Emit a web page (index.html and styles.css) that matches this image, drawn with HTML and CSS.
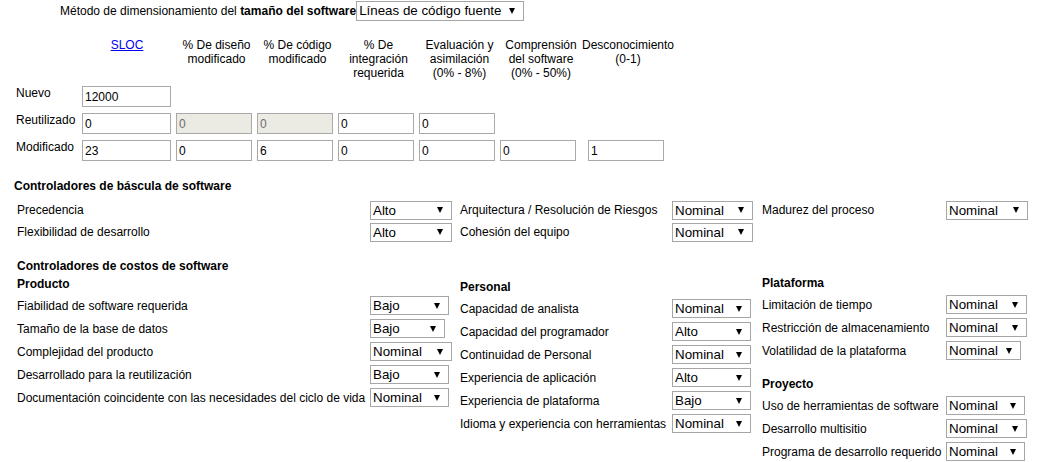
FILE: index.html
```html
<!DOCTYPE html>
<html lang="es">
<head>
<meta charset="utf-8">
<title>COCOMO II</title>
<link rel="stylesheet" href="styles.css">
</head>
<body>
<div class="method">
  <span class="method-label">Método de dimensionamiento del <b>tamaño del software</b></span>
  <span class="dd w168 tall"><select><option>Líneas de código fuente</option></select></span>
</div>

<div class="sizing">
  <div class="sz-row sz-head">
    <div></div>
    <div class="hd c1"><a href="#">SLOC</a></div>
    <div class="hd">% De diseño<br>modificado</div>
    <div class="hd">% De código<br>modificado</div>
    <div class="hd">% De<br>integración<br>requerida</div>
    <div class="hd">Evaluación y<br>asimilación<br>(0% - 8%)</div>
    <div class="hd">Comprensión<br>del software<br>(0% - 50%)</div>
    <div class="hd c7">Desconocimiento<br>(0-1)</div>
  </div>
  <div class="sz-row">
    <div class="rl">Nuevo</div>
    <div><input class="in wide" type="text" value="12000"></div>
  </div>
  <div class="sz-row">
    <div class="rl">Reutilizado</div>
    <div><input class="in wide" type="text" value="0"></div>
    <div><input class="in" type="text" value="0" disabled></div>
    <div><input class="in" type="text" value="0" disabled></div>
    <div><input class="in" type="text" value="0"></div>
    <div><input class="in" type="text" value="0"></div>
  </div>
  <div class="sz-row">
    <div class="rl">Modificado</div>
    <div><input class="in wide" type="text" value="23"></div>
    <div><input class="in" type="text" value="0"></div>
    <div><input class="in" type="text" value="6"></div>
    <div><input class="in" type="text" value="0"></div>
    <div><input class="in" type="text" value="0"></div>
    <div><input class="in" type="text" value="0"></div>
    <div><input class="in last" type="text" value="1"></div>
  </div>
</div>

<div class="scale">
  <div class="section-title st-scale">Controladores de báscula de software</div>
  <div class="scale-grid">
    <div class="lab la">Precedencia</div>
    <span class="dd w82"><select><option>Alto</option></select></span>
    <div class="lab">Arquitectura / Resolución de Riesgos</div>
    <span class="dd w81"><select><option>Nominal</option></select></span>
    <div class="lab">Madurez del proceso</div>
    <span class="dd w82"><select><option>Nominal</option></select></span>

    <div class="lab la">Flexibilidad de desarrollo</div>
    <span class="dd w82"><select><option>Alto</option></select></span>
    <div class="lab">Cohesión del equipo</div>
    <span class="dd w81"><select><option>Nominal</option></select></span>
    <div></div>
    <div></div>
  </div>
</div>

<div class="cost">
  <div class="section-title st-cost">Controladores de costos de software</div>
  <div class="cost-cols">
    <div class="col col-a">
      <div class="section-title">Producto</div>
      <div class="rows">
        <div class="lab">Fiabilidad de software requerida</div>
        <span class="dd w79"><select><option>Bajo</option></select></span>
        <div class="lab">Tamaño de la base de datos</div>
        <span class="dd w75"><select><option>Bajo</option></select></span>
        <div class="lab">Complejidad del producto</div>
        <span class="dd w82"><select><option>Nominal</option></select></span>
        <div class="lab">Desarrollado para la reutilización</div>
        <span class="dd w79"><select><option>Bajo</option></select></span>
        <div class="lab">Documentación coincidente con las necesidades del ciclo de vida</div>
        <span class="dd w79"><select><option>Nominal</option></select></span>
      </div>
    </div>
    <div class="col col-b">
      <div class="section-title">Personal</div>
      <div class="rows">
        <div class="lab">Capacidad de analista</div>
        <span class="dd w79"><select><option>Nominal</option></select></span>
        <div class="lab">Capacidad del programador</div>
        <span class="dd w79"><select><option>Alto</option></select></span>
        <div class="lab">Continuidad de Personal</div>
        <span class="dd w79"><select><option>Nominal</option></select></span>
        <div class="lab">Experiencia de aplicación</div>
        <span class="dd w79"><select><option>Alto</option></select></span>
        <div class="lab">Experiencia de plataforma</div>
        <span class="dd w79"><select><option>Bajo</option></select></span>
        <div class="lab">Idioma y experiencia con herramientas</div>
        <span class="dd w79"><select><option>Nominal</option></select></span>
      </div>
    </div>
    <div class="col col-c">
      <div class="section-title">Plataforma</div>
      <div class="rows">
        <div class="lab">Limitación de tiempo</div>
        <span class="dd w81"><select><option>Nominal</option></select></span>
        <div class="lab">Restricción de almacenamiento</div>
        <span class="dd w81"><select><option>Nominal</option></select></span>
        <div class="lab">Volatilidad de la plataforma</div>
        <span class="dd w75"><select><option>Nominal</option></select></span>
      </div>
      <div class="section-title proj">Proyecto</div>
      <div class="rows">
        <div class="lab">Uso de herramientas de software</div>
        <span class="dd w79"><select><option>Nominal</option></select></span>
        <div class="lab">Desarrollo multisitio</div>
        <span class="dd w81"><select><option>Nominal</option></select></span>
        <div class="lab">Programa de desarrollo requerido</div>
        <span class="dd w79"><select><option>Nominal</option></select></span>
      </div>
    </div>
  </div>
</div>
</body>
</html>
```

FILE: styles.css
```css
* {
  box-sizing: border-box;
}

body {
  margin: 0;
  font-family: "Liberation Sans", Arial, sans-serif;
  font-size: 12px;
  color: #000;
  background: #fff;
}

/* dropdowns */
.dd {
  position: relative;
  display: inline-block;
  height: 19px;
}

.dd select {
  -webkit-appearance: none;
  appearance: none;
  display: block;
  width: 100%;
  height: 100%;
  margin: 0;
  padding: 0 0 0 2px;
  border: 1px solid #a6a6a6;
  border-radius: 0;
  background: #fff;
  color: #000;
  font-family: "Liberation Sans", Arial, sans-serif;
  font-size: 13.333px;
  line-height: 17px;
}

.dd::after {
  content: "";
  position: absolute;
  right: 9px;
  top: 50%;
  margin-top: -3px;
  border-left: 3px solid transparent;
  border-right: 3px solid transparent;
  border-top: 6px solid #000;
  pointer-events: none;
}

.dd.tall {
  height: 20px;
}

.w75 { width: 75px; }
.w79 { width: 79px; }
.w81 { width: 81px; }
.w82 { width: 82px; }
.w168 { width: 168px; }

/* top method line */
.method {
  display: flex;
  align-items: center;
  height: 21px;
  padding-left: 60px;
}

.method-label {
  white-space: nowrap;
}

/* sizing table */
.sizing {
  margin-top: 17px;
  display: flex;
  flex-direction: column;
  gap: 6px;
  padding-left: 16px;
}

.sz-row {
  display: grid;
  grid-template-columns: 66px 94px 81px 81px 81px 81px 82px 92px;
  align-items: start;
}

.sz-head {
  line-height: 14px;
}

.hd {
  text-align: center;
}

.hd.c1 {
  padding-right: 4px;
}

.hd a {
  color: #0000ee;
  text-decoration: underline;
}

.rl {
  line-height: 14px;
}

.in {
  display: block;
  width: 76px;
  height: 21px;
  margin: 0;
  padding: 0 2px;
  border: 1px solid #a9a9a9;
  border-radius: 0;
  background: #fff;
  color: #000;
  font-family: "Liberation Sans", Arial, sans-serif;
  font-size: 12px;
}

.in.wide {
  width: 89px;
}

.in.last {
  margin-left: 6px;
}

.in:disabled {
  background: #ebebe4;
  color: #6d6d6d;
}

/* driver sections */
.section-title {
  font-weight: bold;
  line-height: 15px;
}

.scale {
  margin-top: 18px;
}

.st-scale {
  padding-left: 14px;
}

.scale-grid {
  margin-top: 5px;
  display: grid;
  grid-template-columns: 356px 90px 212px 90px 184px auto;
  grid-auto-rows: 22px;
  align-items: center;
  padding-left: 14px;
}

.lab {
  white-space: nowrap;
}

.la {
  padding-left: 3px;
}

.cost {
  margin-top: 16px;
}

.st-cost {
  padding-left: 17px;
}

.cost-cols {
  display: flex;
  align-items: flex-start;
  padding-left: 14px;
}

.col-a {
  width: 446px;
  padding-top: 3px;
  padding-left: 3px;
}

.col-b {
  width: 302px;
  padding-top: 6px;
}

.col-c {
  padding-top: 2px;
}

.col .section-title {
  margin-bottom: 2px;
}

.rows {
  display: grid;
  grid-auto-rows: 23px;
  align-items: center;
}

.col-a .rows {
  grid-template-columns: 353px auto;
}

.col-b .rows {
  grid-template-columns: 212px auto;
}

.col-c .rows {
  grid-template-columns: 184px auto;
}

.section-title.proj {
  margin-top: 15px;
}
```
